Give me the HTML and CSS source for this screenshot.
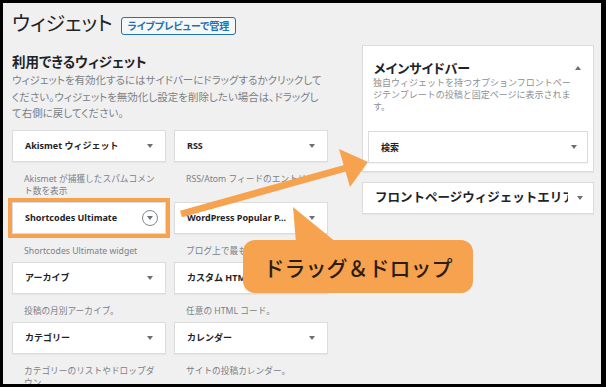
FILE: index.html
```html
<!DOCTYPE html>
<html lang="ja">
<head>
  <meta charset="UTF-8">
  <title>ウィジェット</title>
  <meta name="viewport" content="width=device-width, initial-scale=1.0">
  <link rel="stylesheet" href="styles.css">
</head>
<body>

<div class="screen">
  <header class="page-head">
    <h1>ウィジェット</h1>
    <a class="head-btn">ライブプレビューで管理</a>
  </header>

  <div class="columns">
    <section class="available">
      <h2>利用できるウィジェット</h2>
      <p class="intro">ウィジェットを有効化するにはサイドバーにドラッグするかクリックしてください。ウィジェットを無効化し設定を削除したい場合は、ドラッグして右側に戻してください。</p>

      <div class="widget-grid">
        <div class="widget">
          <div class="widget-top"><span class="widget-title">Akismet ウィジェット</span><i class="caret"></i></div>
          <p class="widget-desc">Akismet が捕獲したスパムコメン<br>ト数を表示</p>
        </div>
        <div class="widget">
          <div class="widget-top"><span class="widget-title">RSS</span><i class="caret"></i></div>
          <p class="widget-desc">RSS/Atom フィードのエントリー</p>
        </div>
        <div class="widget">
          <div class="widget-top highlight"><span class="widget-title">Shortcodes Ultimate</span><span class="caret-ring"><i class="caret"></i></span></div>
          <p class="widget-desc">Shortcodes Ultimate widget</p>
        </div>
        <div class="widget">
          <div class="widget-top"><span class="widget-title">WordPress Popular P...</span><i class="caret"></i></div>
          <p class="widget-desc">ブログ上で最も人気の投稿</p>
        </div>
        <div class="widget">
          <div class="widget-top"><span class="widget-title">アーカイブ</span><i class="caret"></i></div>
          <p class="widget-desc">投稿の月別アーカイブ。</p>
        </div>
        <div class="widget">
          <div class="widget-top"><span class="widget-title">カスタム HTML</span><i class="caret"></i></div>
          <p class="widget-desc">任意の HTML コード。</p>
        </div>
        <div class="widget">
          <div class="widget-top"><span class="widget-title">カテゴリー</span><i class="caret"></i></div>
          <p class="widget-desc">カテゴリーのリストやドロップダ<br>ウン</p>
        </div>
        <div class="widget">
          <div class="widget-top"><span class="widget-title">カレンダー</span><i class="caret"></i></div>
          <p class="widget-desc">サイトの投稿カレンダー。</p>
        </div>
      </div>
    </section>

    <aside class="sidebars">
      <div class="sidebar">
        <div class="sidebar-head">
          <h3>メインサイドバー</h3>
          <i class="caret up"></i>
        </div>
        <p class="sidebar-desc">独自ウィジェットを持つオプションフロントページテンプレートの投稿と固定ページに表示されます。</p>
        <div class="widget-top"><span class="widget-title">検索</span><i class="caret"></i></div>
      </div>

      <div class="sidebar closed">
        <h3>フロントページウィジェットエリア</h3>
        <i class="caret"></i>
      </div>
    </aside>
  </div>

  <svg class="arrows" width="598" height="381" viewBox="0 0 598 381">
    <line x1="178" y1="211" x2="343" y2="165" stroke="#f6a24e" stroke-width="7"/>
    <polygon points="336,146 365,159 347,184" fill="#f6a24e"/>
    <polygon points="290,204 293,240 334,240" fill="#f6a24e"/>
  </svg>
  <div class="bubble">ドラッグ＆ドロップ</div>
</div>

</body>
</html>
```

FILE: styles.css
```css
* {
  box-sizing: border-box;
}

body {
  margin: 0;
  background: #000;
  font-family: "Noto Sans", "Noto Sans CJK JP", sans-serif;
  color: #1d2327;
}

.screen {
  position: relative;
  width: 598px;
  height: 381px;
  margin: 3px 0 0 3px;
  padding: 7px 0 0 9px;
  background: #f0f0f1;
  overflow: hidden;
}

.page-head {
  display: flex;
  align-items: center;
  gap: 8px;
  height: 28px;
}

h1 {
  margin: 0;
  font-size: 20px;
  line-height: 28px;
  font-weight: 400;
  font-feature-settings: "palt";
}

.head-btn {
  margin-top: 4px;
  height: 18px;
  padding: 0 6px;
  border: 1px solid #2271b1;
  border-radius: 3px;
  background: #f6f7f7;
  color: #2271b1;
  font-size: 10px;
  font-weight: 600;
  line-height: 16px;
  font-feature-settings: "palt";
}

.columns {
  display: flex;
  gap: 34px;
  margin-top: 7px;
}

.available {
  width: 316px;
}

h2 {
  margin: 7px 0 0;
  font-size: 13.5px;
  line-height: 20px;
  font-weight: 700;
  font-feature-settings: "palt";
}

.intro {
  max-width: 313px;
  margin: 0;
  font-size: 10.5px;
  line-height: 16.5px;
  color: #7c8085;
  font-feature-settings: "palt";
}

.widget-grid {
  display: grid;
  grid-template-columns: 154px 154px;
  column-gap: 8px;
  margin-top: 8px;
}

.widget-top {
  display: flex;
  align-items: center;
  justify-content: space-between;
  height: 32px;
  padding: 0 12px;
  background: #fff;
  border: 1px solid #dcdcde;
  box-shadow: 0 1px 1px rgba(0, 0, 0, 0.04);
}

.widget-top.highlight {
  outline: 4px solid #f6a24e;
}

.widget-title {
  font-size: 9px;
  font-weight: 700;
  white-space: nowrap;
}

.widget-desc {
  margin: 11px 0 5px;
  padding: 0 0 0 12px;
  font-size: 8.7px;
  line-height: 12px;
  color: #7c8085;
}

.caret {
  display: block;
  width: 0;
  height: 0;
  border-left: 3px solid transparent;
  border-right: 3px solid transparent;
  border-top: 4px solid #6c7076;
}

.caret.up {
  border-top: none;
  border-bottom: 4px solid #6c7076;
}

.caret-ring {
  display: flex;
  align-items: center;
  justify-content: center;
  width: 16px;
  height: 16px;
  margin-right: -5px;
  border: 1.5px solid #7e8993;
  border-radius: 50%;
}

.sidebars {
  width: 232px;
}

.sidebar {
  padding: 0 5px 8px;
  background: #fff;
  border: 1px solid #dcdcde;
  box-shadow: 0 1px 1px rgba(0, 0, 0, 0.04);
}

.sidebar-head {
  display: flex;
  align-items: center;
  justify-content: space-between;
  height: 31px;
  padding: 13px 7px 0 6px;
}

h3 {
  margin: 0;
  font-size: 13px;
  line-height: 18px;
  font-weight: 700;
  font-feature-settings: "palt";
}

.sidebar-desc {
  margin: 0 0 18px;
  padding: 0 12px 0 5px;
  font-size: 9px;
  line-height: 12px;
  color: #8c8f94;
}

.sidebar .widget-top {
  padding: 0 10px 0 12px;
}

.sidebar.closed {
  display: flex;
  align-items: center;
  gap: 9px;
  height: 32px;
  margin-top: 10px;
  padding: 0 10px 0 12px;
}

.sidebar.closed h3 {
  flex: 1;
  min-width: 0;
  overflow: hidden;
  white-space: nowrap;
  font-size: 12.5px;
  font-feature-settings: normal;
}

.arrows {
  position: absolute;
  left: 0;
  top: 0;
  pointer-events: none;
}

.bubble {
  position: absolute;
  left: 240px;
  top: 237px;
  width: 230px;
  height: 53px;
  display: flex;
  align-items: center;
  justify-content: center;
  background: #f6a24e;
  border-radius: 12px;
  color: #2b1d12;
  font-size: 21px;
  font-weight: 500;
}
```
